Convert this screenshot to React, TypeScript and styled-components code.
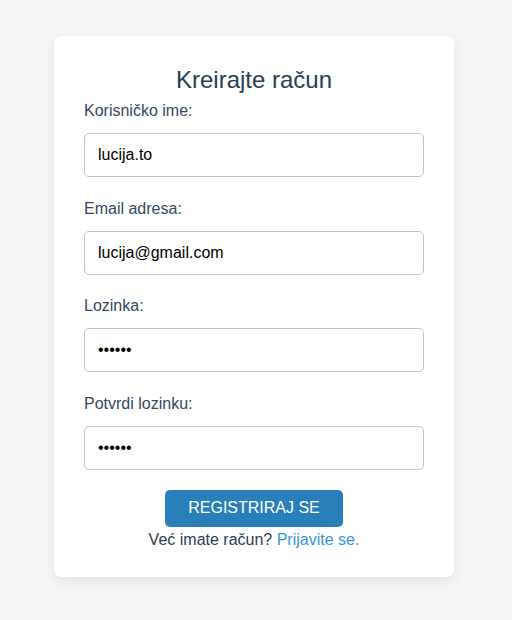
import styled, { createGlobalStyle } from 'styled-components';

const GlobalStyle = createGlobalStyle`
  html, body {
    margin: 0;
    padding: 0;
    background: #f4f6f6;
    font-family: "Liberation Sans", Arial, sans-serif;
  }
`;

const Page = styled.div`
  display: flex;
  justify-content: center;
  padding: 36px 4px 0 0;
  min-height: 620px;
  box-sizing: border-box;
`;

const Card = styled.form`
  width: 400px;
  box-sizing: border-box;
  padding: 30px 30px 28px;
  background: #ffffff;
  border-radius: 8px;
  box-shadow: 0 4px 12px rgba(0, 0, 0, 0.08);
  display: flex;
  flex-direction: column;
  align-self: flex-start;
`;

const Title = styled.h2`
  margin: 0 0 8px;
  font-size: 24px;
  font-weight: 400;
  line-height: 28px;
  text-align: center;
  color: #2c3e50;
`;

const Label = styled.label`
  display: block;
  font-size: 16px;
  line-height: 18px;
  color: #34495e;
  margin-bottom: 13px;
`;

const Field = styled.div<{ $last?: boolean }>`
  margin-bottom: ${(p) => (p.$last ? '20px' : '22.6px')};
`;

const Input = styled.input`
  display: block;
  width: 100%;
  height: 44px;
  box-sizing: border-box;
  padding: 0 13px;
  border: 1px solid #c4c4c4;
  border-radius: 5px;
  font-family: "Liberation Sans", Arial, sans-serif;
  font-size: 16px;
  color: #000;
  background: #fff;
  outline: none;
`;

const Button = styled.button`
  align-self: center;
  width: 178px;
  height: 37px;
  border: none;
  border-radius: 5px;
  background: #2980b9;
  color: #ffffff;
  font-family: "Liberation Sans", Arial, sans-serif;
  font-size: 16px;
  cursor: pointer;
`;

const Footer = styled.p`
  margin: 4px 0 0;
  text-align: center;
  font-size: 16px;
  line-height: 18px;
  color: #2c3e50;

  a {
    color: #3498db;
    text-decoration: none;
  }
`;

const fields = [
  { id: 'username', label: 'Korisničko ime:', type: 'text', value: 'lucija.to' },
  { id: 'email', label: 'Email adresa:', type: 'email', value: 'lucija@gmail.com' },
  { id: 'password', label: 'Lozinka:', type: 'password', value: '123456' },
  { id: 'confirm', label: 'Potvrdi lozinku:', type: 'password', value: '123456' },
];

function App() {
  return (
    <>
      <GlobalStyle />
      <Page>
        <Card onSubmit={(e) => e.preventDefault()}>
          <Title>Kreirajte račun</Title>
          {fields.map((f, i) => (
            <Field key={f.id} $last={i === fields.length - 1}>
              <Label htmlFor={f.id}>{f.label}</Label>
              <Input id={f.id} type={f.type} defaultValue={f.value} />
            </Field>
          ))}
          <Button type='submit'>REGISTRIRAJ SE</Button>
          <Footer>
            Već imate račun? <a href='#'>Prijavite se.</a>
          </Footer>
        </Card>
      </Page>
    </>
  );
}

export default App;
